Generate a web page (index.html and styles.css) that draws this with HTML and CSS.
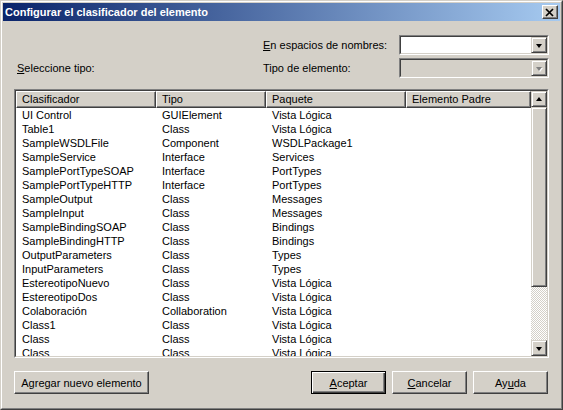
FILE: index.html
```html
<!DOCTYPE html>
<html>
<head>
<meta charset="utf-8">
<link rel="stylesheet" href="styles.css">
</head>
<body>
<div class="window">
  <div class="frame">
    <div class="titlebar">
      <span class="title">Configurar el clasificador del elemento</span>
      <div class="closebtn">
        <svg width="10" height="9" viewBox="0 0 10 9"><path d="M1 1 L8 8 M8 1 L1 8" stroke="#000" stroke-width="1.7" fill="none"/></svg>
      </div>
    </div>
    <div class="content">
      <div class="topgrid">
        <span class="lbl ns-lbl"><u>E</u>n espacios de nombres:</span>
        <div class="combo ns-combo"><div class="combo-in"><div class="combo-field"></div><div class="arrowbtn"><span class="tri-down"></span></div></div></div>
        <span class="lbl sel-lbl"><u>S</u>eleccione tipo:</span>
        <span class="lbl tipo-lbl">Tipo de elemento:</span>
        <div class="combo disabled tipo-combo"><div class="combo-in"><div class="combo-field"></div><div class="arrowbtn"><span class="tri-down dis"></span></div></div></div>
      </div>

      <div class="listview">
        <div class="lv-in">
          <div class="lv-main">
            <div class="lv-head">
              <div class="hc c1">Clasificador</div>
              <div class="hc c2">Tipo</div>
              <div class="hc c3">Paquete</div>
              <div class="hc c4">Elemento Padre</div>
            </div>
            <div class="lv-rows">
              <div class="row"><span class="c1">UI Control</span><span class="c2">GUIElement</span><span class="c3">Vista Lógica</span></div>
              <div class="row"><span class="c1">Table1</span><span class="c2">Class</span><span class="c3">Vista Lógica</span></div>
              <div class="row"><span class="c1">SampleWSDLFile</span><span class="c2">Component</span><span class="c3">WSDLPackage1</span></div>
              <div class="row"><span class="c1">SampleService</span><span class="c2">Interface</span><span class="c3">Services</span></div>
              <div class="row"><span class="c1">SamplePortTypeSOAP</span><span class="c2">Interface</span><span class="c3">PortTypes</span></div>
              <div class="row"><span class="c1">SamplePortTypeHTTP</span><span class="c2">Interface</span><span class="c3">PortTypes</span></div>
              <div class="row"><span class="c1">SampleOutput</span><span class="c2">Class</span><span class="c3">Messages</span></div>
              <div class="row"><span class="c1">SampleInput</span><span class="c2">Class</span><span class="c3">Messages</span></div>
              <div class="row"><span class="c1">SampleBindingSOAP</span><span class="c2">Class</span><span class="c3">Bindings</span></div>
              <div class="row"><span class="c1">SampleBindingHTTP</span><span class="c2">Class</span><span class="c3">Bindings</span></div>
              <div class="row"><span class="c1">OutputParameters</span><span class="c2">Class</span><span class="c3">Types</span></div>
              <div class="row"><span class="c1">InputParameters</span><span class="c2">Class</span><span class="c3">Types</span></div>
              <div class="row"><span class="c1">EstereotipoNuevo</span><span class="c2">Class</span><span class="c3">Vista Lógica</span></div>
              <div class="row"><span class="c1">EstereotipoDos</span><span class="c2">Class</span><span class="c3">Vista Lógica</span></div>
              <div class="row"><span class="c1">Colaboración</span><span class="c2">Collaboration</span><span class="c3">Vista Lógica</span></div>
              <div class="row"><span class="c1">Class1</span><span class="c2">Class</span><span class="c3">Vista Lógica</span></div>
              <div class="row"><span class="c1">Class</span><span class="c2">Class</span><span class="c3">Vista Lógica</span></div>
              <div class="row"><span class="c1">Class</span><span class="c2">Class</span><span class="c3">Vista Lógica</span></div>
            </div>
          </div>
          <div class="vscroll">
            <div class="sbtn"><span class="tri-up"></span></div>
            <div class="thumb"></div>
            <div class="track"></div>
            <div class="sbtn"><span class="tri-down"></span></div>
          </div>
        </div>
      </div>

      <div class="buttons">
        <div class="btn wide">Agregar nuevo elemento</div>
        <div class="btn-group">
          <div class="btn default"><u>A</u>ceptar</div>
          <div class="btn"><u>C</u>ancelar</div>
          <div class="btn">Ay<u>u</u>da</div>
        </div>
      </div>
    </div>
  </div>
</div>
</body>
</html>
```
FILE: styles.css
```css
* { box-sizing: border-box; }
html, body { margin: 0; padding: 0; background: #d4d0c8; }
body {
  font-family: "Liberation Sans", Arial, sans-serif;
  font-size: 11px;
  color: #000;
}
.window {
  width: 563px;
  height: 410px;
  border: 1px solid;
  border-color: #d4d0c8 #404040 #404040 #d4d0c8;
  background: #d4d0c8;
}
.frame {
  height: 100%;
  border: 1px solid;
  border-color: #fff #808080 #808080 #fff;
  padding: 1px;
  display: flex;
  flex-direction: column;
}
.titlebar {
  height: 18px;
  flex: none;
  background: linear-gradient(to right, #0a246a, #a6caf0);
  display: flex;
  align-items: center;
  justify-content: space-between;
  padding: 0 2px 0 2px;
}
.title {
  color: #fff;
  font-weight: bold;
  font-size: 11px;
  line-height: 18px;
  white-space: nowrap;
}
.closebtn {
  width: 16px;
  height: 14px;
  background: #d4d0c8;
  border: 1px solid;
  border-color: #fff #404040 #404040 #fff;
  box-shadow: inset -1px -1px #808080;
  display: flex;
  align-items: center;
  justify-content: center;
  padding-right: 1px;
}
.closebtn svg { display: block; }
.content {
  flex: 1;
  padding: 14px 11px 0 11px;
  display: flex;
  flex-direction: column;
}
.topgrid {
  display: grid;
  grid-template-columns: 249px 136px 150px;
  grid-template-rows: 20px 20px;
  row-gap: 3px;
  align-items: center;
}
.lbl { white-space: nowrap; }
.ns-lbl { grid-column: 2; grid-row: 1; }
.ns-combo { grid-column: 3; grid-row: 1; }
.sel-lbl { grid-column: 1; grid-row: 2; padding-left: 3px; }
.tipo-lbl { grid-column: 2; grid-row: 2; }
.tipo-combo { grid-column: 3; grid-row: 2; }
.combo {
  height: 20px;
  border: 1px solid;
  border-color: #808080 #fff #fff #808080;
}
.combo-in {
  height: 100%;
  border: 1px solid;
  border-color: #404040 #d4d0c8 #d4d0c8 #404040;
  background: #fff;
  display: flex;
}
.combo.disabled .combo-in { background: #d4d0c8; }
.combo-field { flex: 1; }
.arrowbtn, .sbtn {
  width: 16px;
  height: 16px;
  flex: none;
  background: #d4d0c8;
  border: 1px solid;
  border-color: #d4d0c8 #404040 #404040 #d4d0c8;
  box-shadow: inset 1px 1px #fff, inset -1px -1px #808080;
  display: flex;
  align-items: center;
  justify-content: center;
}
.tri-down {
  width: 0; height: 0;
  border-left: 3.5px solid transparent;
  border-right: 3.5px solid transparent;
  border-top: 4px solid #000;
  margin-top: 1px;
}
.tri-down.dis {
  border-top-color: #808080;
  filter: drop-shadow(1px 1px 0 #fff);
}
.tri-up {
  width: 0; height: 0;
  border-left: 3.5px solid transparent;
  border-right: 3.5px solid transparent;
  border-bottom: 4px solid #000;
  margin-bottom: 1px;
}
.listview {
  margin-top: 11px;
  height: 269px;
  border: 1px solid;
  border-color: #808080 #fff #fff #808080;
}
.lv-in {
  height: 100%;
  border: 1px solid;
  border-color: #404040 #d4d0c8 #d4d0c8 #404040;
  background: #fff;
  display: flex;
  overflow: hidden;
}
.lv-main {
  flex: 1;
  overflow: hidden;
}
.lv-head {
  display: flex;
  height: 17px;
}
.hc {
  background: #d4d0c8;
  border: 1px solid;
  border-color: #fff #404040 #404040 #fff;
  box-shadow: inset -1px -1px #808080;
  padding-left: 5px;
  line-height: 14px;
  white-space: nowrap;
  overflow: hidden;
}
.c1 { width: 140px; flex: none; }
.c2 { width: 110px; flex: none; }
.c3 { width: 140px; flex: none; }
.c4 { width: 125px; flex: none; }
.row {
  display: flex;
  height: 14px;
  line-height: 14px;
  white-space: nowrap;
}
.row span { padding-left: 6px; overflow: hidden; }
.vscroll {
  width: 16px;
  flex: none;
  display: flex;
  flex-direction: column;
}
.thumb {
  height: 180px;
  flex: none;
  background: #d4d0c8;
  border: 1px solid;
  border-color: #d4d0c8 #404040 #404040 #d4d0c8;
  box-shadow: inset 1px 1px #fff, inset -1px -1px #808080;
}
.track {
  flex: 1;
  background: repeating-conic-gradient(#fff 0 25%, #d4d0c8 0 50%) 0 0 / 2px 2px;
}
.buttons {
  margin-top: 13px;
  display: flex;
  justify-content: space-between;
}
.btn-group {
  display: flex;
  gap: 6px;
  margin-right: 1px;
}
.btn {
  width: 75px;
  height: 23px;
  background: #d4d0c8;
  border: 1px solid;
  border-color: #fff #404040 #404040 #fff;
  box-shadow: inset -1px -1px #808080;
  display: flex;
  align-items: center;
  justify-content: center;
  white-space: nowrap;
}
.btn.wide { width: 135px; }
.btn.default {
  border: 1px solid #000;
  box-shadow: inset 1px 1px #fff, inset -1px -1px #404040, inset -2px -2px #808080;
}
```
